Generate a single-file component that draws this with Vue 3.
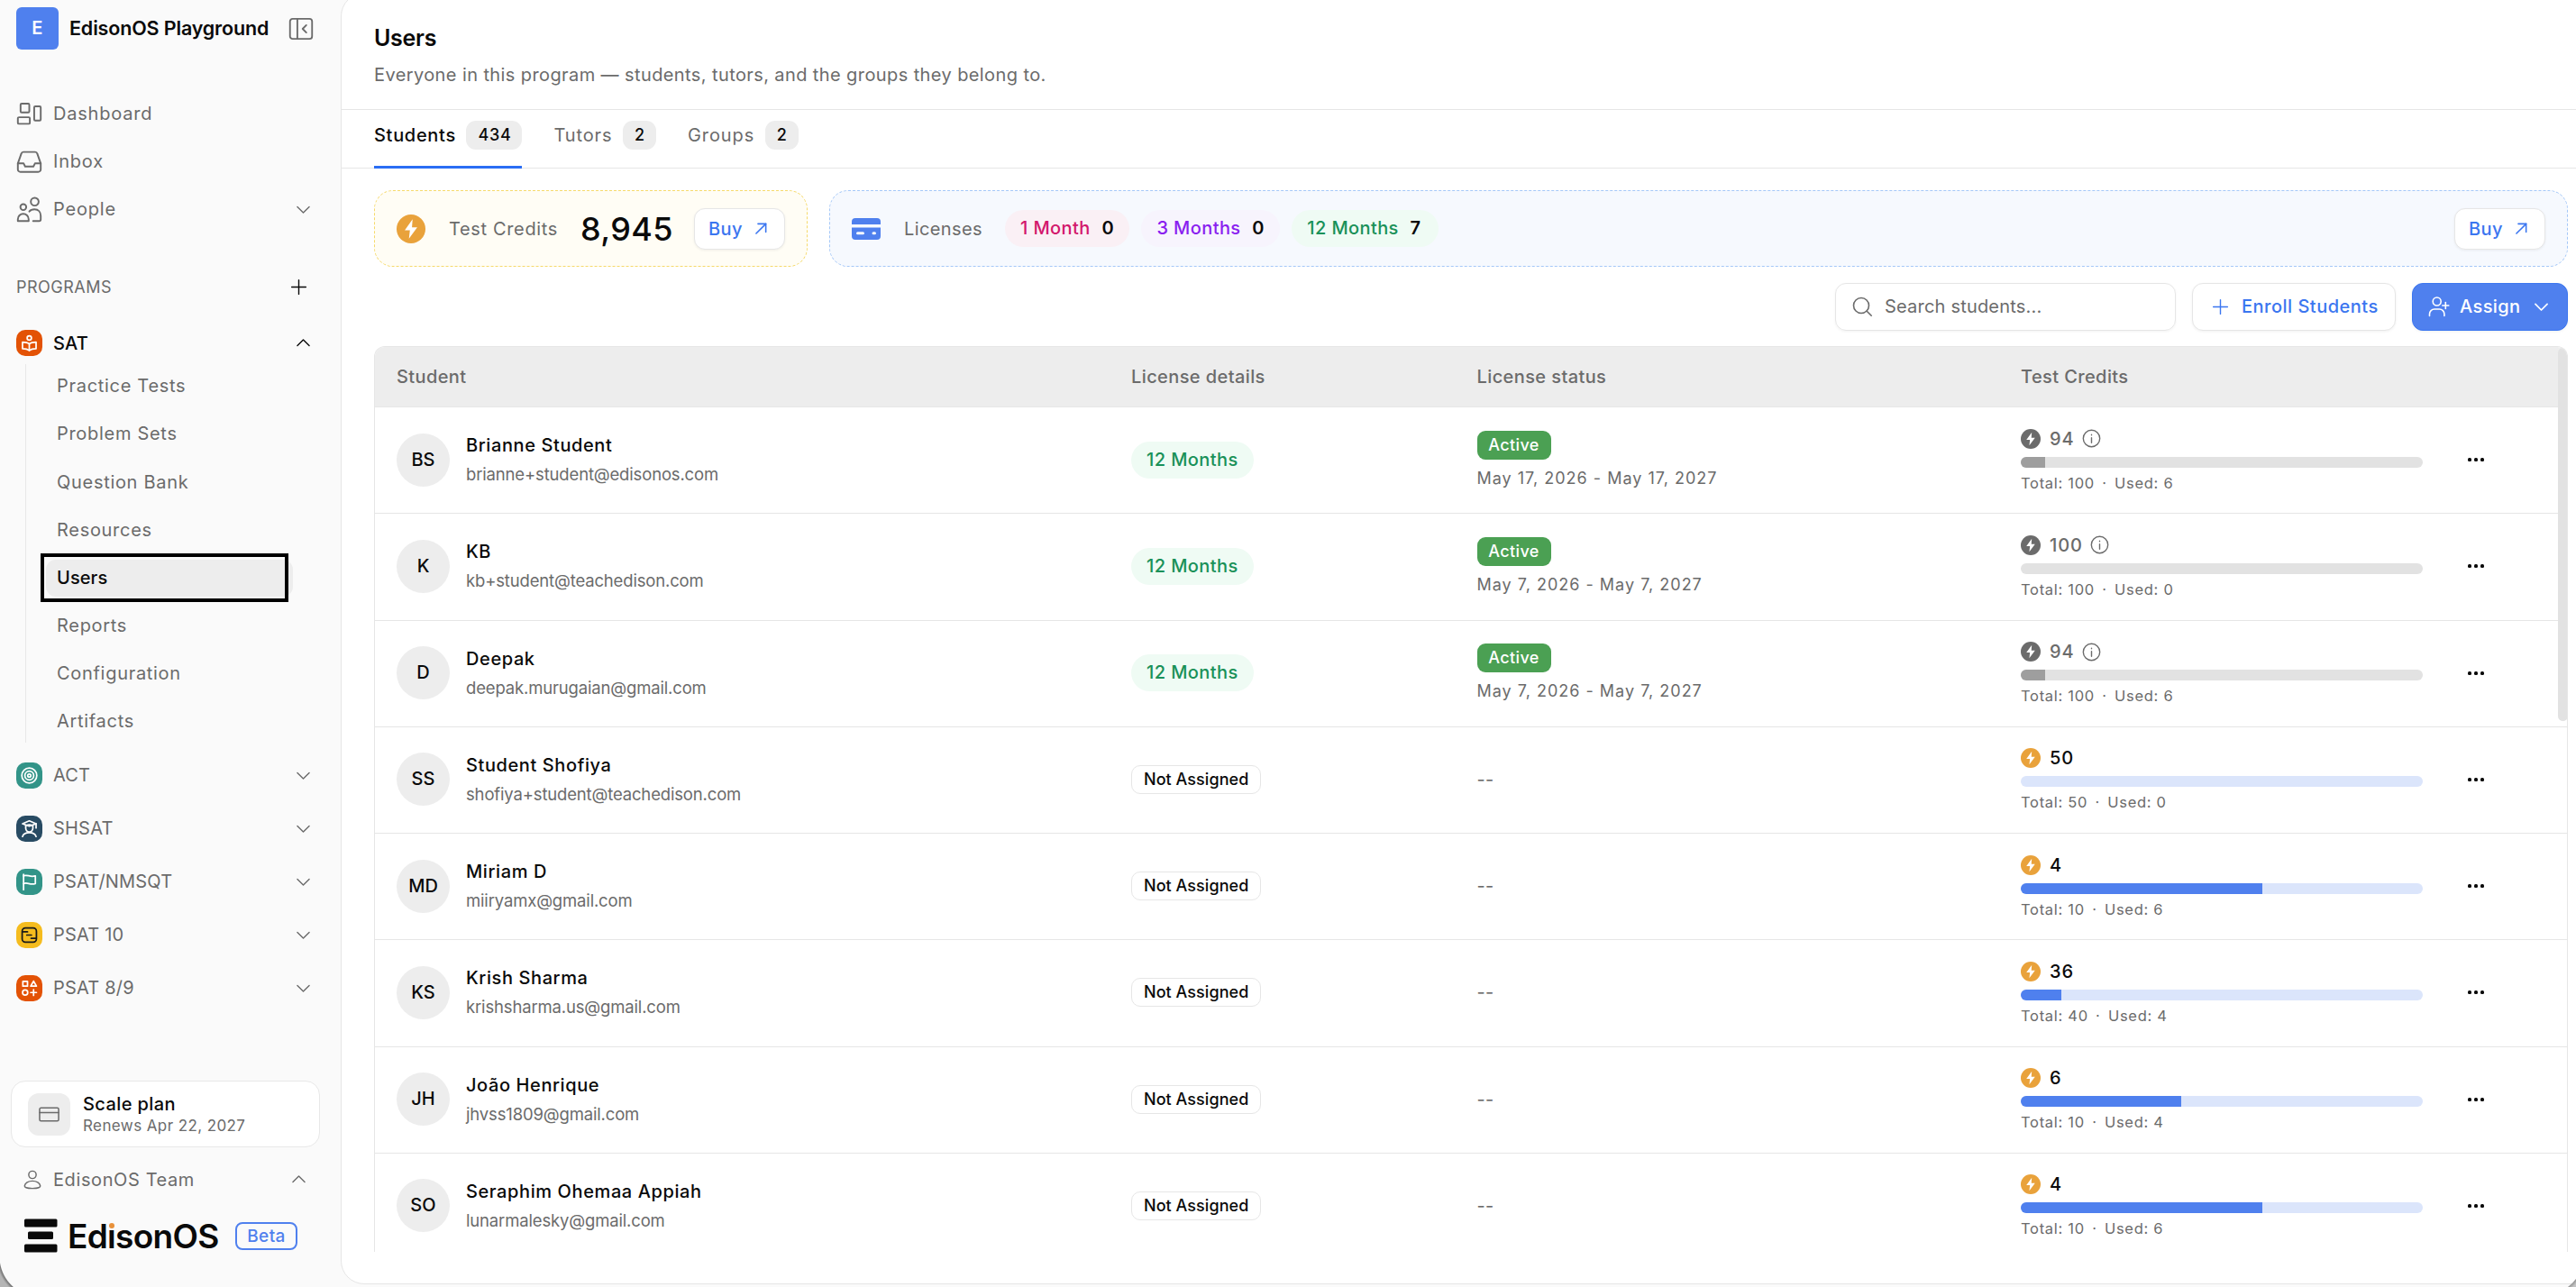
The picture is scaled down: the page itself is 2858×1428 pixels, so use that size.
<script setup>
import { ref } from 'vue'

const activeTab = ref('Students')
const search = ref('')

// stroke icons, 24x24 grid
const icons = {
  dashboard: ['M5 2.500h6a1 1 0 0 1 1 1v6a1 1 0 0 1-1 1H5a1 1 0 0 1-1-1v-6a1 1 0 0 1 1-1z', 'M2.500 15h9a1 1 0 0 1 1 1v4a1 1 0 0 1-1 1h-9a1 1 0 0 1-1-1v-4a1 1 0 0 1 1-1z', 'M17.500 5h4a1 1 0 0 1 1 1v11a1 1 0 0 1-1 1h-4a1 1 0 0 1-1-1V6a1 1 0 0 1 1-1z'],
  inbox: ['M1.500 13.500l3.200-9A2 2 0 0 1 6.600 3h10.800a2 2 0 0 1 1.900 1.500l3.200 9V19a2.300 2.300 0 0 1-2.300 2.300H3.800A2.300 2.300 0 0 1 1.500 19z', 'M1.500 13.500h5.300l1.400 2.800h7.600l1.400-2.800h5.300'],
  people: ['M9.200 9.800a2.700 2.700 0 1 1-5.400 0 2.700 2.700 0 0 1 5.400 0z', 'M20.600 4.800a3.600 3.600 0 1 1-7.200 0 3.600 3.600 0 0 1 7.200 0z', 'M1.500 22.500v-1.600a4.700 4.700 0 0 1 9.900 0v1.600z', 'M12 13.800c1-1.300 2.700-2 4.800-2 3.600 0 5.700 2.500 5.700 6V21a1.500 1.500 0 0 1-1.500 1.500h-5.500'],
  panel: ['M4 2.500h16a2.500 2.500 0 0 1 2.500 2.500v14a2.500 2.500 0 0 1-2.500 2.500H4A2.500 2.500 0 0 1 1.500 19V5A2.500 2.500 0 0 1 4 2.500z', 'M8.500 2.500v19', 'M17 8.500L13.500 12l3.500 3.500'],
  down: ['M4.500 8.500L12 16l7.500-7.500'],
  up: ['M4.500 15.500L12 8l7.500 7.500'],
  plus: ['M12 3v18', 'M3 12h18'],
  arrow: ['M5 19L18.500 5.500', 'M7.500 5.500h11v11.500'],
  search: ['M19.500 11a8.500 8.500 0 1 1-17 0 8.500 8.500 0 0 1 17 0z', 'M17.200 17.200l5 5'],
  assign: ['M14.200 6.500a4.500 4.500 0 1 1-9 0 4.500 4.500 0 0 1 9 0z', 'M1.500 22.500v-2a5.500 5.500 0 0 1 5.500-5.500h5.400a5.500 5.500 0 0 1 5.500 5.500v2', 'M19.300 7.500v7', 'M15.800 11h7'],
  card: ['M2.500 4.500h19a1.500 1.500 0 0 1 1.500 1.500v12a1.500 1.500 0 0 1-1.500 1.500h-19A1.500 1.500 0 0 1 1 18V6a1.500 1.500 0 0 1 1.500-1.500z', 'M1 10h22'],
  user: ['M16.500 6a4.500 4.500 0 1 1-9 0 4.500 4.500 0 0 1 9 0z', 'M2.500 19.500C3 16 7 13.500 12 13.500s9 2.500 9.500 6c.2 1.600-2 3-9.500 3s-9.700-1.400-9.500-3z'],
  info: ['M22.500 12a10.500 10.500 0 1 1-21 0 10.500 10.500 0 0 1 21 0z', 'M12 11v6.500', 'M12 7.200v.6'],
  reader: ['M15 5a3 3 0 1 1-6 0 3 3 0 0 1 6 0z', 'M12 13.500c-2-1.800-5-2.600-9.500-2.600V20c4 0 7.300.8 9.500 2.500 2.200-1.700 5.500-2.500 9.500-2.500v-9.100c-4.500 0-7.500.8-9.500 2.600z', 'M12 13.500v9'],
  target: ['M22.500 12a10.500 10.500 0 1 1-21 0 10.500 10.500 0 0 1 21 0z', 'M18.200 12a6.200 6.200 0 1 1-12.400 0 6.200 6.200 0 0 1 12.400 0z', 'M14.200 12a2.200 2.200 0 1 1-4.400 0 2.200 2.200 0 0 1 4.400 0z'],
  graduate: ['M2.500 5L12 1l9.500 4L12 8.500z', 'M7 7v4.500a5 5 0 0 0 10 0V7', 'M21.500 5v6', 'M7.500 7.500c3-1.500 6-1.500 9 0', 'M2.500 23c1-3.500 5-5.500 9.500-5.500s8.500 2 9.500 5.500'],
  flag: ['M4 1.500V23', 'M4 3.500c5-2.500 9 2.500 16.500 0v11C13 17 9 12 4 14.500'],
  board: ['M6.500 2h11A4.500 4.500 0 0 1 22 6.500v11a4.500 4.500 0 0 1-4.500 4.500h-11A4.500 4.500 0 0 1 2 17.500v-11A4.500 4.500 0 0 1 6.500 2z', 'M2.500 7.500h7', 'M8.500 12h6.500', 'M14.500 16.500h7'],
  shapes: ['M3 2.500h6.500V9H3z', 'M18 2l4 7h-8z', 'M9.800 18a3.600 3.600 0 1 1-7.200 0 3.600 3.600 0 0 1 7.200 0z', 'M18 14v8', 'M14 18h8']
}

const mainNav = [
  { label: 'Dashboard', icon: 'dashboard' },
  { label: 'Inbox', icon: 'inbox' },
  { label: 'People', icon: 'people', expandable: true }
]

const satItems = ['Practice Tests', 'Problem Sets', 'Question Bank', 'Resources', 'Users', 'Reports', 'Configuration', 'Artifacts']

const programs = [
  { label: 'ACT', icon: 'target', tone: 'teal' },
  { label: 'SHSAT', icon: 'graduate', tone: 'navy' },
  { label: 'PSAT/NMSQT', icon: 'flag', tone: 'teal' },
  { label: 'PSAT 10', icon: 'board', tone: 'yellow' },
  { label: 'PSAT 8/9', icon: 'shapes', tone: 'orange' }
]

const tabs = [
  { label: 'Students', count: 434 },
  { label: 'Tutors', count: 2 },
  { label: 'Groups', count: 2 }
]

const licenses = [
  { label: '1 Month', count: 0, tone: 'pink' },
  { label: '3 Months', count: 0, tone: 'purple' },
  { label: '12 Months', count: 7, tone: 'green' }
]

const students = [
  { initials: 'BS', name: 'Brianne Student', email: 'brianne+student@edisonos.com', dates: 'May 17, 2026 - May 17, 2027', total: 100, used: 6 },
  { initials: 'K', name: 'KB', email: 'kb+student@teachedison.com', dates: 'May 7, 2026 - May 7, 2027', total: 100, used: 0 },
  { initials: 'D', name: 'Deepak', email: 'deepak.murugaian@gmail.com', dates: 'May 7, 2026 - May 7, 2027', total: 100, used: 6 },
  { initials: 'SS', name: 'Student Shofiya', email: 'shofiya+student@teachedison.com', total: 50, used: 0 },
  { initials: 'MD', name: 'Miriam D', email: 'miiryamx@gmail.com', total: 10, used: 6 },
  { initials: 'KS', name: 'Krish Sharma', email: 'krishsharma.us@gmail.com', total: 40, used: 4 },
  { initials: 'JH', name: 'João Henrique', email: 'jhvss1809@gmail.com', total: 10, used: 4 },
  { initials: 'SO', name: 'Seraphim Ohemaa Appiah', email: 'lunarmalesky@gmail.com', total: 10, used: 6 }
]
</script>

<template>
  <div class="app">
    <aside class="sidebar">
      <div class="workspace">
        <span class="workspace-logo">E</span>
        <span class="workspace-name">EdisonOS Playground</span>
        <svg class="icon panel-icon" viewBox="0 0 24 24"><path v-for="d in icons.panel" :key="d" :d="d" /></svg>
      </div>

      <nav class="main-nav">
        <a v-for="item in mainNav" :key="item.label" class="nav-item">
          <svg class="icon nav-icon" viewBox="0 0 24 24"><path v-for="d in icons[item.icon]" :key="d" :d="d" /></svg>
          <span>{{ item.label }}</span>
          <svg v-if="item.expandable" class="icon chevron" viewBox="0 0 24 24"><path :d="icons.down[0]" /></svg>
        </a>
      </nav>

      <div class="section-title">
        <span>PROGRAMS</span>
        <svg class="icon plus-icon" viewBox="0 0 24 24"><path v-for="d in icons.plus" :key="d" :d="d" /></svg>
      </div>

      <a class="program open">
        <span class="program-icon orange">
          <svg class="icon" viewBox="0 0 24 24"><path v-for="d in icons.reader" :key="d" :d="d" /></svg>
        </span>
        <span>SAT</span>
        <svg class="icon chevron" viewBox="0 0 24 24"><path :d="icons.up[0]" /></svg>
      </a>
      <div class="sub-nav">
        <a v-for="item in satItems" :key="item" class="sub-item" :class="{ active: item === 'Users' }">
          {{ item }}
          <span v-if="item === 'Users'" class="focus-box"></span>
        </a>
      </div>
      <a v-for="program in programs" :key="program.label" class="program">
        <span class="program-icon" :class="program.tone">
          <svg class="icon" viewBox="0 0 24 24"><path v-for="d in icons[program.icon]" :key="d" :d="d" /></svg>
        </span>
        <span>{{ program.label }}</span>
        <svg class="icon chevron" viewBox="0 0 24 24"><path :d="icons.down[0]" /></svg>
      </a>

      <div class="sidebar-footer">
        <div class="plan">
          <span class="plan-icon">
            <svg class="icon" viewBox="0 0 24 24"><path v-for="d in icons.card" :key="d" :d="d" /></svg>
          </span>
          <div>
            <div class="plan-name">Scale plan</div>
            <div class="plan-date">Renews Apr 22, 2027</div>
          </div>
        </div>
        <div class="team">
          <svg class="icon team-icon" viewBox="0 0 24 24"><path v-for="d in icons.user" :key="d" :d="d" /></svg>
          <span>EdisonOS Team</span>
          <svg class="icon chevron" viewBox="0 0 24 24"><path :d="icons.up[0]" /></svg>
        </div>
        <div class="brand">
          <svg class="brand-mark" viewBox="0 0 37 38">
            <rect x="0" y="0.500" width="36.500" height="9" rx="1.500" />
            <rect x="4" y="14.500" width="28" height="8.500" rx="1.500" />
            <rect x="0" y="28.500" width="36.500" height="9" rx="1.500" />
          </svg>
          <span class="brand-name">Ed<span class="dotted">ı</span>sonOS</span>
          <span class="beta">Beta</span>
        </div>
      </div>
    </aside>

    <main class="main">
      <header class="page-header">
        <h1>Users</h1>
        <p>Everyone in this program — students, tutors, and the groups they belong to.</p>
      </header>

      <div class="tabs">
        <button
          v-for="tab in tabs"
          :key="tab.label"
          class="tab"
          :class="{ active: tab.label === activeTab }"
          @click="activeTab = tab.label"
        >
          <span>{{ tab.label }}</span>
          <span class="tab-count">{{ tab.count }}</span>
        </button>
      </div>

      <div class="content">
        <div class="summary">
          <section class="summary-card credits-card">
            <svg class="bolt" viewBox="0 0 24 24"><circle cx="12" cy="12" r="12" /><path d="M13.300 4L6.800 13.200h4.300L10.300 20l6.900-9.300h-4.400z" /></svg>
            <span class="summary-label">Test Credits</span>
            <span class="credits-total">8,945</span>
            <button class="btn buy">
              Buy
              <svg class="icon" viewBox="0 0 24 24"><path v-for="d in icons.arrow" :key="d" :d="d" /></svg>
            </button>
          </section>
          <section class="summary-card license-card">
            <svg class="card-solid" viewBox="0 0 32 24">
              <path d="M4 0h24a4 4 0 0 1 4 4v3H0V4a4 4 0 0 1 4-4z" />
              <path fill-rule="evenodd" d="M0 10.500h32V20a4 4 0 0 1-4 4H4a4 4 0 0 1-4-4zM6.500 15.200a1.500 1.500 0 0 0 0 3h6a1.500 1.500 0 0 0 0-3zM24 15.200a1.500 1.500 0 0 0 0 3h1.500a1.500 1.500 0 0 0 0-3z" />
            </svg>
            <span class="summary-label">Licenses</span>
            <div class="license-list">
              <span v-for="license in licenses" :key="license.label" class="license" :class="license.tone">
                {{ license.label }} <b>{{ license.count }}</b>
              </span>
            </div>
            <button class="btn buy">
              Buy
              <svg class="icon" viewBox="0 0 24 24"><path v-for="d in icons.arrow" :key="d" :d="d" /></svg>
            </button>
          </section>
        </div>

        <div class="toolbar">
          <label class="search">
            <svg class="icon" viewBox="0 0 24 24"><path v-for="d in icons.search" :key="d" :d="d" /></svg>
            <input v-model="search" type="text" placeholder="Search students..." />
          </label>
          <button class="btn enroll">
            <svg class="icon" viewBox="0 0 24 24"><path v-for="d in icons.plus" :key="d" :d="d" /></svg>
            Enroll Students
          </button>
          <button class="btn assign">
            <svg class="icon assign-icon" viewBox="0 0 24 24"><path v-for="d in icons.assign" :key="d" :d="d" /></svg>
            Assign
            <svg class="icon assign-chevron" viewBox="0 0 24 24"><path :d="icons.down[0]" /></svg>
          </button>
        </div>

        <div class="table">
          <div class="row head">
            <span>Student</span>
            <span>License details</span>
            <span>License status</span>
            <span>Test Credits</span>
          </div>
          <div v-for="s in students" :key="s.email" class="row">
            <div class="student">
              <span class="avatar">{{ s.initials }}</span>
              <div>
                <div class="name">{{ s.name }}</div>
                <div class="email">{{ s.email }}</div>
              </div>
            </div>
            <div>
              <span v-if="s.dates" class="license green">12 Months</span>
              <span v-else class="unassigned">Not Assigned</span>
            </div>
            <div v-if="s.dates" class="status">
              <span class="active-badge">Active</span>
              <span class="dates">{{ s.dates }}</span>
            </div>
            <div v-else class="dash">--</div>
            <div class="usage" :class="{ muted: s.dates }">
              <div class="usage-top">
                <svg class="bolt" viewBox="0 0 24 24"><circle cx="12" cy="12" r="12" /><path d="M13.300 4L6.800 13.200h4.300L10.300 20l6.900-9.300h-4.400z" /></svg>
                <span class="left">{{ s.total - s.used }}</span>
                <svg v-if="s.dates" class="icon info" viewBox="0 0 24 24"><path v-for="d in icons.info" :key="d" :d="d" /></svg>
              </div>
              <div class="bar"><div class="bar-fill" :style="{ width: (s.used / s.total) * 100 + '%' }"></div></div>
              <div class="usage-text">Total: {{ s.total }} <i>·</i> Used: {{ s.used }}</div>
            </div>
            <button class="more"><i></i><i></i><i></i></button>
          </div>
          <span class="scroll-thumb"></span>
        </div>
      </div>
    </main>

    <span class="corner corner-left"></span>
    <span class="corner corner-right"></span>
  </div>
</template>

<style>
body {
  background: #fafafa;
  overflow: hidden;
}
</style>

<style scoped>
.app {
  position: relative;
  display: flex;
  width: 2858px;
  height: 1428px;
  overflow: hidden;
  background: #fafafa;
  color: #0a0a0a;
  font-family: Inter, 'Noto Sans', sans-serif;
  font-size: 20px;
  letter-spacing: 0.4px;
  white-space: nowrap;
}
.app * {
  box-sizing: border-box;
}
.icon {
  flex: none;
  fill: none;
  stroke: currentColor;
  stroke-width: 1.6;
  stroke-linecap: round;
  stroke-linejoin: round;
}
button {
  margin: 0;
  padding: 0;
  border: 0;
  background: none;
  font: inherit;
  color: inherit;
  letter-spacing: inherit;
}

/* sidebar */
.sidebar {
  display: flex;
  flex-direction: column;
  flex: none;
  width: 378px;
  padding: 8px 0 37px;
  color: #6b6b6b;
}
.workspace {
  display: flex;
  align-items: center;
  height: 47px;
  padding-left: 18px;
}
.workspace-logo {
  width: 47px;
  height: 47px;
  border-radius: 6px;
  background: #4f80ee;
  color: #fff;
  font-weight: 600;
  line-height: 46px;
  text-align: center;
}
.workspace-name {
  width: 243px;
  margin: -2px 0 0 12px;
  color: #0a0a0a;
  font-size: 21.500px;
  font-weight: 600;
  letter-spacing: -0.15px;
}
.panel-icon {
  width: 28px;
  height: 28px;
}
.main-nav {
  margin-top: 44.500px;
}
.nav-item {
  display: flex;
  align-items: center;
  height: 53.200px;
  padding: 0 31px 0 18px;
  letter-spacing: 0.8px;
}
.nav-icon {
  width: 29px;
  height: 29px;
  margin-right: 12px;
}
.chevron {
  width: 21px;
  height: 21px;
  margin-left: auto;
}
.section-title {
  display: flex;
  align-items: center;
  justify-content: space-between;
  height: 40px;
  margin: 39px 36px 13px 18px;
  font-size: 18px;
  letter-spacing: 0.5px;
}
.plus-icon {
  width: 21px;
  height: 21px;
  color: #0a0a0a;
}
.program {
  display: flex;
  align-items: center;
  flex: none;
  height: 59.100px;
  padding: 0 31px 0 18px;
  letter-spacing: 0.2px;
}
.program.open {
  color: #0a0a0a;
  font-weight: 500;
}
.program-icon {
  display: flex;
  align-items: center;
  justify-content: center;
  width: 29px;
  height: 29px;
  margin-right: 12px;
  border-radius: 10px;
  color: #fff;
}
.program-icon .icon {
  width: 19px;
  height: 19px;
  stroke-width: 2.200;
}
.orange {
  background: #e35205;
}
.teal {
  background: #329488;
}
.navy {
  background: #284b63;
}
.program-icon.yellow {
  background: #f5bc1e;
  color: #1a1a1a;
}
.sub-nav {
  margin: -6px 0 6px 28px;
  padding-bottom: 3px;
  border-left: 1.500px solid #e8e8e8;
}
.sub-item {
  position: relative;
  display: block;
  height: 41px;
  margin: 0 53px 12.200px 22px;
  padding-left: 12px;
  border-radius: 11px;
  line-height: 41px;
  letter-spacing: 0.7px;
}
.sub-item:first-child {
  margin-top: 4px;
}
.sub-item:last-child {
  margin-bottom: 0;
}
.sub-item.active {
  background: #ededed;
  color: #0a0a0a;
  font-weight: 500;
  letter-spacing: 0.1px;
}
/* outline drawn over the selected item, slightly off its edges */
.focus-box {
  position: absolute;
  top: -7px;
  left: -6px;
  width: 275px;
  height: 54px;
  border: 4px solid #000;
}
.sidebar-footer {
  margin-top: auto;
}
.plan {
  display: flex;
  align-items: center;
  width: 343px;
  height: 74px;
  margin-left: 12px;
  padding-left: 18px;
  border: 1.500px solid #e8e8e8;
  border-radius: 16px;
  background: #fff;
}
.plan-icon {
  display: flex;
  align-items: center;
  justify-content: center;
  width: 47px;
  height: 47px;
  margin-right: 14px;
  border-radius: 12px;
  background: #ededed;
}
.plan-icon .icon {
  width: 23px;
  height: 23px;
}
.plan-name {
  color: #0a0a0a;
  font-weight: 500;
  line-height: 26px;
}
.plan-date {
  font-size: 17px;
  line-height: 23px;
}
.team {
  display: flex;
  align-items: center;
  height: 53px;
  margin-top: 9px;
  padding: 0 36px 0 25px;
  letter-spacing: 0.6px;
}
.team-icon {
  width: 22px;
  height: 22px;
  margin-right: 12px;
}
.brand {
  display: flex;
  align-items: center;
  height: 40px;
  margin: 16px 0 0 27px;
}
.brand-mark {
  width: 37px;
  height: 38px;
  fill: #0a0a0a;
}
.brand-name {
  width: 186px;
  margin-left: 11px;
  color: #0a0a0a;
  font-size: 37px;
  font-weight: 600;
  letter-spacing: -0.7px;
}
.dotted {
  position: relative;
}
.dotted::after {
  content: '';
  position: absolute;
  top: 8px;
  left: 2px;
  width: 6px;
  height: 6px;
  border-radius: 50%;
  background: #e8913a;
}
.beta {
  width: 69px;
  height: 31px;
  border: 2px solid #4f80ee;
  border-radius: 8px;
  color: #4f80ee;
  font-size: 19px;
  font-weight: 500;
  line-height: 27px;
  text-align: center;
}

/* main panel */
.main {
  display: flex;
  flex: none;
  flex-direction: column;
  width: 2500px;
  height: 1433px;
  margin-top: -8px;
  border: 1.500px solid #e6e6e6;
  border-radius: 26px;
  background: #fff;
}
.page-header {
  height: 129px;
  padding: 31px 0 0 36px;
  border-bottom: 1.500px solid #e6e6e6;
}
h1 {
  margin: 0;
  font-size: 25px;
  font-weight: 600;
  line-height: 36px;
  letter-spacing: -0.3px;
}
p {
  margin: 7px 0 0;
  color: #6b6b6b;
  line-height: 32px;
}
.tabs {
  display: flex;
  gap: 35px;
  height: 65px;
  padding-left: 36px;
  border-bottom: 1.500px solid #e6e6e6;
  color: #6b6b6b;
}
.tab {
  display: flex;
  align-items: center;
  gap: 11.500px;
  height: 65px;
  padding-bottom: 7px;
  border-bottom: 3px solid transparent;
  letter-spacing: 0.9px;
}
.tab.active {
  border-color: #2a6df4;
  color: #0a0a0a;
  font-weight: 500;
  letter-spacing: 0.7px;
}
.tab-count {
  height: 32px;
  padding: 0 12px 0 13px;
  border-radius: 11px;
  background: #ededed;
  color: #0a0a0a;
  font-size: 18px;
  font-weight: 500;
  line-height: 32px;
}
.content {
  padding: 24px 0 0 36px;
}
.summary {
  display: flex;
  gap: 24px;
}
.summary-card {
  display: flex;
  align-items: center;
  height: 85px;
  padding: 0 24px;
  border-radius: 21px;
}
.credits-card {
  width: 481px;
  border: 1.500px dashed #f6da6c;
  background: #fffdf5;
}
.license-card {
  width: 1929px;
  border: 1.500px dashed #a5c8f8;
  background: #f6f9fe;
}
.bolt {
  flex: none;
  width: 32px;
  height: 32px;
  fill: #e9a23b;
}
.bolt path {
  fill: #fff;
}
.summary-label {
  margin-left: 26px;
  color: #6b6b6b;
}
.credits-card .summary-label {
  letter-spacing: 0.65px;
}
.credits-total {
  width: 126px;
  margin-left: auto;
  font-size: 36px;
  font-weight: 500;
}
.btn {
  display: flex;
  align-items: center;
  border: 1.500px solid #e6e6e6;
  border-radius: 12px;
  background: #fff;
  color: #3b76f0;
  font-weight: 500;
  box-shadow: 0 1px 3px rgba(0, 0, 0, 0.06);
}
.buy {
  width: 101px;
  height: 46px;
  padding-left: 15px;
}
.buy .icon {
  width: 19px;
  height: 19px;
  margin-left: 11px;
  stroke-width: 2;
}
.license-card .buy {
  margin-left: auto;
}
.card-solid {
  width: 32px;
  height: 24px;
  fill: #4f80ee;
}
.license-list {
  display: flex;
  gap: 13px;
  margin-left: 25px;
}
.license {
  display: inline-block;
  height: 41px;
  padding: 0 17px;
  border-radius: 21px;
  font-weight: 500;
  line-height: 41px;
}
.license b {
  display: inline-block;
  width: 14px;
  margin-left: 7px;
  color: #0a0a0a;
  font-weight: 600;
}
.pink {
  background: #faf0f5;
  color: #d3186c;
}
.purple {
  background: #f7f4fd;
  color: #8a1ff0;
}
.green {
  background: #effbf4;
  color: #1a9159;
}

.toolbar {
  display: flex;
  justify-content: flex-end;
  gap: 18px;
  width: 2434px;
  margin-top: 17.500px;
}
.search {
  display: flex;
  align-items: center;
  width: 378px;
  height: 53px;
  padding-left: 17px;
  border: 1.500px solid #e6e6e6;
  border-radius: 12px;
  color: #6b6b6b;
  letter-spacing: 0.2px;
  box-shadow: 0 1px 3px rgba(0, 0, 0, 0.05);
}
.search .icon {
  width: 24px;
  height: 24px;
  margin-right: 13px;
}
.search input {
  width: 300px;
  padding: 0;
  border: 0;
  outline: 0;
  background: none;
  font: inherit;
  letter-spacing: inherit;
}
.search input::placeholder {
  color: #6b6b6b;
}
.enroll {
  width: 226px;
  height: 53px;
  padding-left: 20px;
  letter-spacing: 0.5px;
}
.enroll .icon {
  width: 21px;
  height: 21px;
  margin-right: 13px;
}
.btn.assign {
  width: 173px;
  height: 53px;
  padding-left: 17px;
  border-color: #3b76f0;
  background: #4f80ee;
  color: #fff;
}
.assign-icon {
  width: 24px;
  height: 24px;
  margin-right: 11px;
}
.assign-chevron {
  width: 21px;
  height: 21px;
  margin-left: auto;
  margin-right: 18px;
  stroke-width: 2;
}

.table {
  position: relative;
  width: 2434px;
  height: 1005px;
  margin-top: 17.500px;
  overflow: hidden;
  border: 1.500px solid #e6e6e6;
  border-bottom: 0;
  border-radius: 12px 12px 0 0;
}
.row {
  display: grid;
  grid-template-columns: 815px 383.500px 603.500px 496px 1fr;
  align-items: center;
  height: 118.250px;
  padding: 0 0 1px 24px;
  border-bottom: 1.500px solid #e6e6e6;
}
.row.head {
  height: 67px;
  padding-bottom: 0;
  background: #ededed;
  color: #6b6b6b;
  font-weight: 500;
}
.student {
  display: flex;
  align-items: center;
}
.avatar {
  width: 59px;
  height: 59px;
  margin-right: 18px;
  border-radius: 50%;
  background: #ededed;
  font-weight: 500;
  letter-spacing: 0;
  line-height: 59px;
  text-align: center;
}
.name {
  font-weight: 500;
  line-height: 32px;
  letter-spacing: 0.6px;
}
.email {
  color: #6b6b6b;
  font-size: 18.500px;
  line-height: 32px;
  letter-spacing: -0.16px;
}
.unassigned {
  display: inline-block;
  height: 32px;
  padding: 0 13px;
  border: 1.500px solid #e6e6e6;
  border-radius: 10px;
  font-size: 18px;
  font-weight: 500;
  letter-spacing: 0.05px;
  line-height: 29px;
}
.status {
  display: flex;
  flex-direction: column;
  align-items: flex-start;
  padding-top: 2px;
}
.active-badge {
  width: 82px;
  height: 32px;
  border-radius: 9px;
  background: #4ba053;
  color: #fff;
  font-size: 18px;
  font-weight: 500;
  line-height: 32px;
  text-align: center;
}
.dates {
  margin-top: 6px;
  color: #6b6b6b;
  font-size: 18px;
  line-height: 29px;
  letter-spacing: 1px;
}
.dash {
  color: #6b6b6b;
}
.usage {
  width: 446px;
}
.usage-top {
  display: flex;
  align-items: center;
  height: 28px;
  font-weight: 500;
  letter-spacing: 0.9px;
}
.usage .bolt {
  width: 22px;
  height: 22px;
  margin-right: 10px;
}
.info {
  width: 21px;
  height: 21px;
  margin-left: 8px;
}
.bar {
  height: 12px;
  margin-top: 6px;
  overflow: hidden;
  border-radius: 6px;
  background: #dbe5fb;
}
.bar-fill {
  height: 12px;
  background: #4f80ee;
}
.usage-text {
  margin-top: 5px;
  color: #6b6b6b;
  font-size: 16.500px;
  line-height: 24px;
  letter-spacing: 0.7px;
}
.usage-text i {
  margin: 0 3px;
  font-style: normal;
}
.muted .usage-top {
  color: #6b6b6b;
}
.muted .bolt {
  fill: #6b6b6b;
}
.muted .bar {
  background: #e2e2e2;
}
.muted .bar-fill {
  background: #9e9e9e;
}
.more {
  display: flex;
  gap: 3px;
}
.more i {
  width: 4px;
  height: 4px;
  border-radius: 1.500px;
  background: #0a0a0a;
}
.scroll-thumb {
  position: absolute;
  top: 1px;
  right: -1px;
  width: 11.500px;
  height: 414px;
  border-radius: 6px;
  background: #e2e2e2;
}

/* rounded window corners */
.corner {
  position: absolute;
  bottom: 0;
}
.corner-left {
  left: 0;
  width: 15px;
  height: 28px;
  background: radial-gradient(circle at 44px -5.600px, transparent 44px, #777 45px, #b5b5b5 48px);
}
.corner-right {
  right: 0;
  width: 10px;
  height: 10px;
  background: radial-gradient(circle at -25.700px -25.700px, transparent 44px, #999 45px, #c4c4c4 48px);
}
</style>
